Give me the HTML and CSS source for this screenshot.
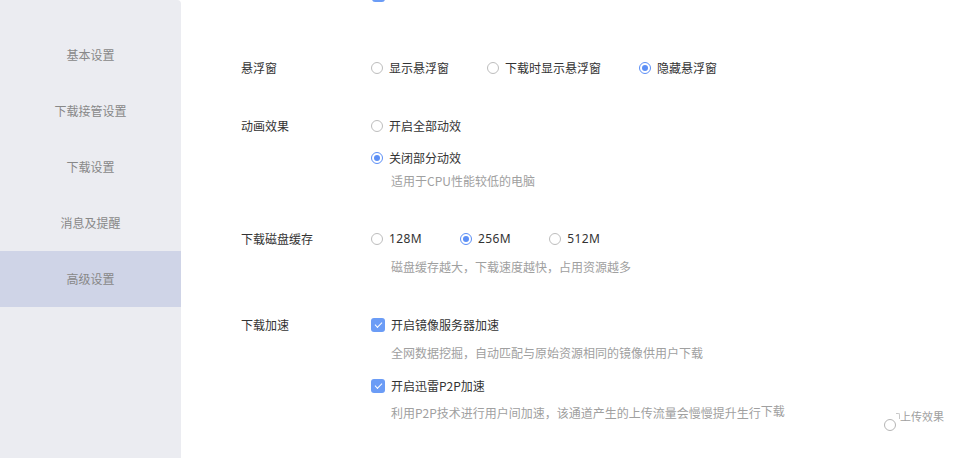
FILE: index.html
```html
<!DOCTYPE html>
<html lang="zh-CN">
<head>
<meta charset="utf-8">
<title>高级设置</title>
<link rel="stylesheet" href="styles.css">
</head>
<body>
<aside class="sidebar">
  <div class="nav-item">基本设置</div>
  <div class="nav-item">下载接管设置</div>
  <div class="nav-item">下载设置</div>
  <div class="nav-item">消息及提醒</div>
  <div class="nav-item active">高级设置</div>
</aside>
<main class="content">
  <div class="prev-row"><span class="checkbox checked"></span></div>

  <section class="row row-first">
    <div class="label">悬浮窗</div>
    <div class="options">
      <div class="inline">
        <label class="opt"><span class="radio"></span>显示悬浮窗</label>
        <label class="opt"><span class="radio"></span>下载时显示悬浮窗</label>
        <label class="opt"><span class="radio checked"></span>隐藏悬浮窗</label>
      </div>
    </div>
  </section>

  <section class="row">
    <div class="label">动画效果</div>
    <div class="options">
      <label class="opt"><span class="radio"></span>开启全部动效</label>
      <label class="opt stack"><span class="radio checked"></span>关闭部分动效</label>
      <div class="desc desc-tight">适用于CPU性能较低的电脑</div>
    </div>
  </section>

  <section class="row">
    <div class="label">下载磁盘缓存</div>
    <div class="options">
      <div class="inline">
        <label class="opt"><span class="radio"></span><span class="num">128M</span></label>
        <label class="opt"><span class="radio checked"></span><span class="num">256M</span></label>
        <label class="opt"><span class="radio"></span><span class="num">512M</span></label>
      </div>
      <div class="desc">磁盘缓存越大，下载速度越快，占用资源越多</div>
    </div>
  </section>

  <section class="row">
    <div class="label">下载加速</div>
    <div class="options">
      <label class="opt"><span class="checkbox checked"></span>开启镜像服务器加速</label>
      <div class="desc">全网数据挖掘，自动匹配与原始资源相同的镜像供用户下载</div>
      <label class="opt stack stack-wide"><span class="checkbox checked"></span>开启迅雷P2P加速</label>
      <div class="desc desc-last">利用P2P技术进行用户间加速，该通道产生的上传流量会慢慢提升生行<span class="raised">下载</span></div>
    </div>
  </section>

  <div class="stray"><span class="radio"></span><span class="stray-mark"></span><span class="stray-text">上传效果</span></div>
</main>
</body>
</html>
```

FILE: styles.css
```css
* { box-sizing: border-box; }

html, body {
  margin: 0;
  padding: 0;
  height: 100%;
  background: #ffffff;
}

body {
  display: flex;
  font-family: "Noto Sans CJK SC", "Noto Sans", "Liberation Sans", sans-serif;
  font-size: 12px;
  color: #333333;
  overflow: hidden;
}

.num {
  font-family: "Noto Sans", "Noto Sans CJK SC", sans-serif;
  letter-spacing: 0.4px;
}

.sidebar {
  width: 181px;
  flex: none;
  height: 458px;
  background: #ebecf1;
  border-top-right-radius: 4px;
  padding-top: 27px;
}

.nav-item {
  height: 56px;
  line-height: 56px;
  text-align: center;
  color: #888888;
  font-size: 12px;
}

.nav-item.active {
  background: #cfd4e7;
}

.content {
  flex: 1;
  position: relative;
  padding-left: 60px;
}

.prev-row {
  padding-left: 131px;
  height: 13px;
  margin-top: -11px;
}

.row {
  display: flex;
  margin-top: 38px;
}

.row-first {
  margin-top: 56px;
}

.label {
  width: 130px;
  flex: none;
  line-height: 20px;
  color: #333333;
}

.options {
  display: flex;
  flex-direction: column;
  align-items: flex-start;
}

.inline {
  display: flex;
}

.inline .opt {
  margin-right: 38px;
}

.opt {
  display: flex;
  align-items: center;
  height: 20px;
  line-height: 20px;
  color: #333333;
  white-space: nowrap;
}

.opt.stack {
  margin-top: 12px;
}

.opt.stack-wide {
  margin-top: 13px;
}

.radio {
  width: 12px;
  height: 12px;
  border: 1px solid #bdbdbd;
  border-radius: 50%;
  margin-right: 6px;
  flex: none;
  display: flex;
  align-items: center;
  justify-content: center;
  background: #fff;
}

.radio.checked {
  border-color: #5c8ff6;
}

.radio.checked::after {
  content: "";
  width: 6px;
  height: 6px;
  border-radius: 50%;
  background: #5c8ff6;
}

.checkbox {
  width: 14px;
  height: 14px;
  border-radius: 3px;
  margin-right: 6px;
  flex: none;
  display: inline-flex;
  align-items: center;
  justify-content: center;
  background: #6b9cf6;
}

.prev-row .checkbox {
  width: 13px;
  height: 13px;
  display: block;
}

.checkbox.checked::after {
  content: "";
  width: 6px;
  height: 3px;
  border-left: 1.5px solid #fff;
  border-bottom: 1.5px solid #fff;
  transform: translateY(-1px) rotate(-45deg);
}

.prev-row .checkbox::after { display: none; }

.desc {
  margin-top: 8px;
  padding-left: 20px;
  line-height: 20px;
  color: #a0a0a0;
  white-space: nowrap;
}

.desc-tight {
  margin-top: 3px;
}

.desc-last {
  margin-top: 7px;
}

.raised {
  position: relative;
  top: -2px;
}

.stray {
  position: absolute;
  left: 703px;
  top: 406px;
  display: flex;
  align-items: flex-start;
}

.stray .radio {
  margin-top: 13px;
  margin-right: 0;
  border-color: #b5b5b5;
}

.stray-mark {
  width: 4px;
  height: 6px;
  margin-top: 7px;
  border-top: 1px solid #c8c8c8;
  border-right: 1px solid #c8c8c8;
  border-top-right-radius: 2px;
}

.stray-text {
  line-height: 20px;
  font-size: 11px;
  color: #a0a0a0;
}
```
